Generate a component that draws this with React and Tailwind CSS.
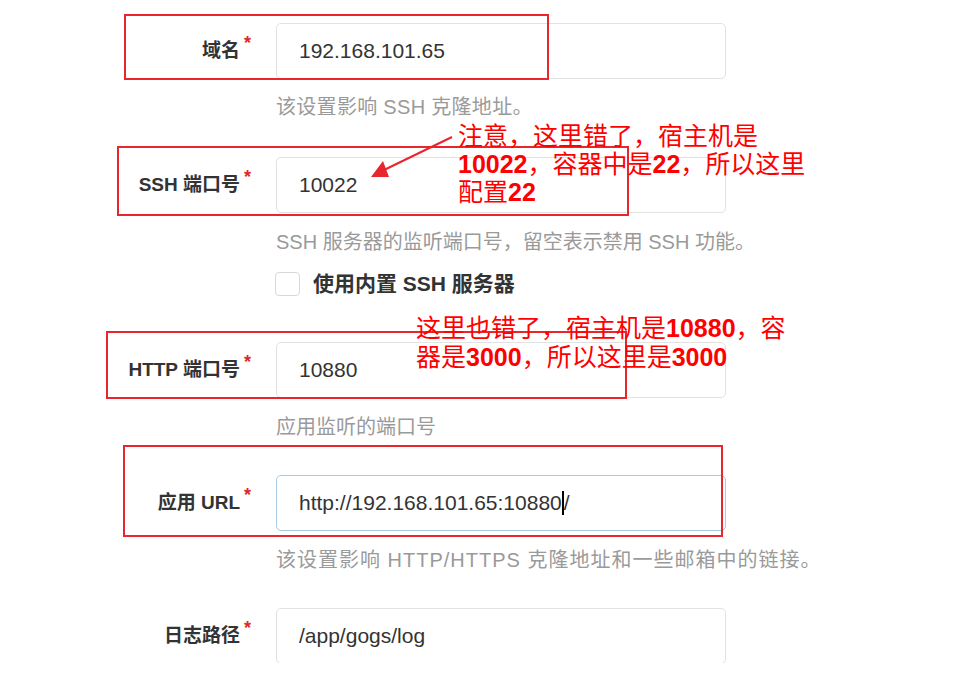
import React from 'react';

const font = "font-['Liberation_Sans','Noto_Sans_CJK_SC',sans-serif]";

const Field = ({ label, value, focused, children }) => (
  <div className="flex items-center">
    <div className="w-[276px] shrink-0 pr-[25px] text-right text-[19px] font-bold text-[#333]">
      {label}
      <span className="relative -top-[8px] ml-[4px] text-[18px] text-[#db2828]">*</span>
    </div>
    <div
      className={`w-[450px] h-[56px] shrink-0 rounded-[5px] border flex items-center pl-[22px] text-[21px] text-[#333] ${
        focused ? 'border-[#a9cbe3]' : 'border-[#e2e2e2]'
      }`}
    >
      {children || value}
    </div>
  </div>
);

const Help = ({ children }) => (
  <div className="ml-[276px] mt-[18px] text-[20px] leading-[20px] text-[#9a9a9a] tracking-[0.3px]">{children}</div>
);

const Box = ({ className }) => (
  <div className={`absolute border-2 border-[#e8262d] pointer-events-none ${className}`} />
);

export default function App() {
  return (
    <div className={`relative w-[964px] h-[688px] bg-white overflow-hidden ${font}`}>
      {/* form */}
      <div className="h-[663px] overflow-hidden pt-[23px] flex flex-col">
        <Field label="域名" value="192.168.101.65" />
        <Help>该设置影响 SSH 克隆地址。</Help>

        <div className="mt-[40px]">
          <Field label="SSH 端口号" value="10022" />
        </div>
        <div className="ml-[276px] mt-[19px] text-[20px] leading-[20px] text-[#9a9a9a]">
          SSH 服务器的监听端口号，留空表示禁用 SSH 功能。
        </div>
        <div className="ml-[275px] mt-[20px] flex items-center gap-[13px]">
          <div className="w-[25px] h-[24px] rounded-[4px] border border-[#d8d8d8]" />
          <span className="text-[21px] font-bold text-[#333] leading-[24px]">使用内置 SSH 服务器</span>
        </div>

        <div className="mt-[46px]">
          <Field label="HTTP 端口号" value="10880" />
        </div>
        <div className="ml-[276px] mt-[19px] text-[20px] leading-[20px] text-[#9a9a9a]">应用监听的端口号</div>

        <div className="mt-[38px]">
          <Field label="应用 URL" focused>
            <span>http://192.168.101.65:10880</span>
            <span className="inline-block w-[2px] h-[24px] bg-black" />
            <span>/</span>
          </Field>
        </div>
        <div className="ml-[276px] mt-[19px] text-[20px] leading-[20px] text-[#9a9a9a] tracking-[1px]">
          该设置影响 HTTP/HTTPS 克隆地址和一些邮箱中的链接。
        </div>

        <div className="mt-[38px]">
          <Field label="日志路径" value="/app/gogs/log" />
        </div>
      </div>

      {/* annotation boxes */}
      <Box className="left-[124px] top-[14px] w-[425px] h-[66px]" />
      <Box className="left-[117px] top-[146px] w-[512px] h-[70px]" />
      <Box className="left-[106px] top-[331px] w-[521px] h-[68px]" />
      <Box className="left-[123px] top-[445px] w-[600px] h-[92px]" />

      {/* arrow */}
      <svg className="absolute left-0 top-0 pointer-events-none" width="964" height="688">
        <line x1="452" y1="137" x2="384" y2="170" stroke="#e8262d" strokeWidth="2" />
        <polygon points="371,177 389,177 383,161" fill="#e8262d" />
      </svg>

      {/* annotation texts */}
      <div className="absolute left-[458px] top-[122px] text-[25px] leading-[28px] text-[#ff0000] whitespace-nowrap">
        <div>注意，这里错了，宿主机是</div>
        <div>
          <b>10022</b>，容器中是<b>22</b>，所以这里
        </div>
        <div>
          配置<b>22</b>
        </div>
      </div>
      <div className="absolute left-[416px] top-[314px] text-[25px] leading-[29px] text-[#ff0000] whitespace-nowrap">
        <div>
          这里也错了，宿主机是<b>10880</b>，容
        </div>
        <div>
          器是<b>3000</b>，所以这里是<b>3000</b>
        </div>
      </div>
    </div>
  );
}
